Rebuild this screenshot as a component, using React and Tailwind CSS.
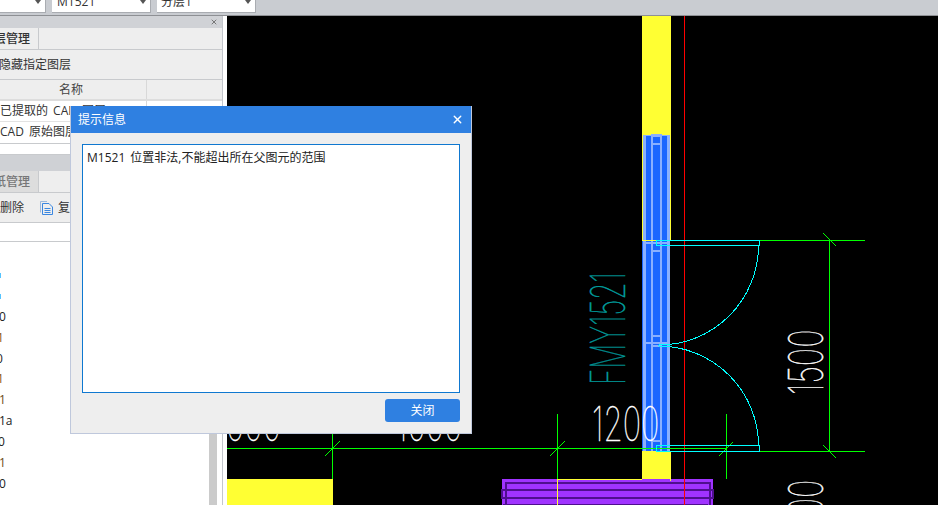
import { X } from "lucide-react";

const font = { fontFamily: '"Open Sans", "Noto Sans CJK SC", sans-serif' };

const listRows = [
  { type: "tick" },
  { type: "tick" },
  { text: "0", cls: "-ml-px text-[#222]" },
  { text: "1", cls: "-ml-[3px] text-[#8a5510]" },
  { text: "0", cls: "-ml-[4px] text-[#222]" },
  { text: "1", cls: "-ml-[3px] text-[#8a5510]" },
  { text: "1", cls: "-ml-px text-[#6b4a18]" },
  { text: "1a", cls: "-ml-px text-[#222]" },
  { text: "0", cls: "-ml-[2px] text-[#222]" },
  { text: "1", cls: "-ml-px text-[#6b4a18]" },
  { text: "0", cls: "-ml-px text-[#222]" },
];

function SelectBox({ className, label, labelClass }) {
  return (
    <div className={`relative h-[13px] overflow-hidden border-r border-b border-[#a9acb1] bg-white ${className}`}>
      <span className={`absolute -top-[7px] text-xs leading-[18px] text-[#333] ${labelClass}`}>{label}</span>
      <span className="absolute right-[4px] top-0 h-0 w-0 border-x-[3px] border-t-[4px] border-x-transparent border-t-[#555]" />
    </div>
  );
}

function TopBar() {
  return (
    <div className="flex h-[16px] shrink-0 gap-[6px] overflow-hidden border-b border-[#8e9094] bg-[#c9ccd1]">
      <SelectBox className="w-[46px]" label="" labelClass="" />
      <SelectBox className="w-[99px]" label="M1521" labelClass="left-[5px]" />
      <SelectBox className="w-[99px]" label="分层1" labelClass="left-[4px]" />
    </div>
  );
}

function LeftPanel() {
  return (
    <div className="flex w-[227px] shrink-0 flex-col bg-white text-xs text-[#333]">
      <div className="flex w-[223px] flex-1 flex-col overflow-hidden border-r border-[#c3c6cc]">
        {/* layer panel */}
        <div className="flex h-[12px] shrink-0 items-center justify-end bg-[#d0d2d6] pr-[4px]">
          <X className="h-[8px] w-[8px] text-[#777]" strokeWidth={3} />
        </div>
        <div className="flex h-[22px] shrink-0 border-b border-[#c8cacd] bg-[#eeeeee]">
          <div className="w-[39px] overflow-hidden border-r border-[#c8cacd] bg-[#eeeeee] leading-[21px]">
            <span className="-ml-[6px] block font-medium whitespace-nowrap">层管理</span>
          </div>
        </div>
        <div className="flex h-[30px] shrink-0 items-center border-b border-[#c8cacd] bg-[#eeeeee]">
          <span className="-ml-px whitespace-nowrap">隐藏指定图层</span>
        </div>
        <div className="flex h-[21px] shrink-0 border-b-2 border-[#dddddd] bg-[#eeeeee]">
          <div className="w-[147px] border-r border-[#d8d8d8] pr-[4px] text-center leading-[19px] text-[#444]">名称</div>
        </div>
        <div className="flex h-[21px] shrink-0 border-b border-[#e2e2e2]">
          <div className="w-[147px] border-r border-[#d8d8d8] leading-[20px] whitespace-nowrap [word-spacing:2px]">已提取的 CAD 图层</div>
        </div>
        <div className="flex h-[22px] shrink-0 border-b border-[#c8cacd]">
          <div className="w-[147px] leading-[20px] whitespace-nowrap [word-spacing:2px]">CAD 原始图层</div>
        </div>
        <div className="h-[11px] shrink-0 border-b border-[#c8cacd] bg-white" />
        <div className="h-[16px] shrink-0 bg-[#cfd1d5]" />

        {/* drawing panel */}
        <div className="flex h-[22px] shrink-0 border-b border-[#c8cacd] bg-[#eeeeee]">
          <div className="w-[39px] overflow-hidden border-r border-[#c8cacd] bg-[#dddddd] leading-[21px] text-[#777]">
            <span className="-ml-[6px] block font-medium whitespace-nowrap">纸管理</span>
          </div>
        </div>
        <div className="flex h-[30px] shrink-0 items-center border-b border-[#c8cacd] bg-[#eeeeee]">
          <span className="whitespace-nowrap">删除</span>
          <svg className="ml-[16px] h-[14px] w-[13px]" viewBox="0 0 13 14" fill="none" stroke="#3b87e0" strokeWidth="1">
            <path d="M0.5 11.5V0.5H7" stroke="#9db9dc" />
            <path d="M2.5 13.5V2.5H9L12.5 6V13.5Z" />
            <path d="M4.5 7.5H10.5M4.5 9.5H10.5M4.5 11.5H10.5" />
          </svg>
          <span className="ml-[5px]">复</span>
        </div>
        <div className="h-[19px] shrink-0 border-b border-[#c8cacd]" />
        <div className="relative flex-1 overflow-hidden pt-[23px]">
          {listRows.map((row, i) =>
            row.type === "tick" ? (
              <div key={i} className="flex h-[20.9px] items-center">
                <span className="h-[5px] w-px bg-[#55c4ff]" />
              </div>
            ) : (
              <div key={i} className={`h-[20.9px] leading-[20.9px] ${row.cls}`}>
                {row.text}
              </div>
            ),
          )}
          <div className="absolute top-0 right-[5px] bottom-0 w-[8px] bg-[#cbcbcb]" />
        </div>
      </div>
    </div>
  );
}

function CadCanvas() {
  const thin = { fontFamily: "Inter, sans-serif", fontWeight: 100, fontSize: 47 };
  return (
    <svg className="block h-[489px] min-w-0 flex-1" viewBox="227 16 711 489">
      <rect x="227" y="16" width="711" height="489" fill="#000" />

      <g shapeRendering="crispEdges">
        {/* yellow column and slab */}
        <rect x="642" y="16" width="29" height="120" fill="#ffff33" />
        <rect x="642" y="451" width="29" height="28" fill="#ffff33" />
        <rect x="227" y="479" width="106" height="26" fill="#ffff33" />

        {/* purple beam */}
        <rect x="502" y="479" width="211" height="26" fill="#a033ff" />
        <g fill="#4f0f8f">
          <rect x="505" y="482" width="205" height="2" />
          <rect x="505" y="482" width="2" height="23" />
          <rect x="709" y="482" width="2" height="23" />
          <rect x="503" y="489" width="209" height="2" />
          <rect x="503" y="497" width="209" height="2" />
          <rect x="503" y="504" width="205" height="1" />
          <rect x="501" y="489" width="2" height="10" />
          <rect x="712" y="489" width="2" height="10" />
        </g>
        <rect x="557" y="479" width="85" height="1" fill="#ffff33" />
        <rect x="557" y="479" width="1" height="26" fill="#ffff33" />
        <rect x="670" y="479" width="1" height="2" fill="#ffff33" />

        {/* door leaves, blue */}
        <rect x="643" y="135" width="27" height="316" fill="#1a66ff" />
        <rect x="642" y="241" width="1" height="210" fill="#1a66ff" />
        <g fill="#8ab0ff">
          <rect x="643" y="136" width="3" height="315" />
          <rect x="651" y="136" width="2" height="315" />
          <rect x="660" y="136" width="2" height="315" />
          <rect x="667" y="136" width="3" height="315" />
          <rect x="643" y="135" width="27" height="1" />
          <rect x="651" y="134" width="11" height="3" />
          <rect x="653" y="143" width="7" height="2" />
          <rect x="643" y="242" width="27" height="2" />
          <rect x="653" y="250" width="7" height="2" />
          <rect x="653" y="335" width="8" height="2" />
          <rect x="645" y="342" width="22" height="2" />
          <rect x="651" y="345" width="9" height="2" />
          <rect x="653" y="440" width="7" height="2" />
        </g>
        <rect x="642" y="135" width="1" height="106" fill="#ffff33" />
        <rect x="670" y="135" width="1" height="106" fill="#ffff33" />
        <rect x="642" y="240" width="15" height="1" fill="#ffff33" />

        {/* red axis */}
        <rect x="684" y="16" width="1" height="489" fill="#ff0000" />

        {/* green dimension lines */}
        <g stroke="#00ff00" strokeWidth="1" fill="none">
          <path d="M759 240.5H865" />
          <path d="M759 451.5H865" />
          <path d="M829.5 240V451" />
          <path d="M823 233L836 246" />
          <path d="M823 445L836 458" />
          <path d="M227 448.5H727" />
          <path d="M726.5 414V479" />
          <path d="M557.5 414V479" />
          <path d="M332.5 430V479" />
          <path d="M719 456L733 442" />
          <path d="M550 456L565 441" />
          <path d="M325 456L340 441" />
        </g>

        {/* door swing */}
        <g stroke="#00ffff" strokeWidth="1" fill="none">
          <rect x="656.5" y="240.5" width="103" height="5" />
          <rect x="656.5" y="445.5" width="103" height="6" />
          <path d="M758.5 245.5A100 100 0 0 1 658 345" />
          <path d="M758.5 446A100 100 0 0 0 658 346" />
        </g>
      </g>

      {/* dimension text */}
      <g style={thin} fill="#ffffff" stroke="#ffffff" strokeWidth="0.5">
        <text transform="translate(592 441) scale(0.66 1)">1200</text>
        <text transform="translate(823 395) rotate(-90) scale(0.66 1)">1500</text>
        <text transform="translate(823 546) rotate(-90) scale(0.66 1)">1000</text>
        <text transform="translate(396 441) scale(0.66 1)">1000</text>
        <text transform="translate(226 441) scale(0.66 1)">000</text>
        <text fill="#00a0a0" stroke="#00a0a0" transform="translate(625 385) rotate(-90) scale(0.595 1)">FMY1521</text>
      </g>
    </svg>
  );
}

function MessageDialog() {
  return (
    <div className="absolute top-[106px] left-[70px] flex h-[328px] w-[402px] flex-col border-r border-b border-l border-[#bfc8dc] bg-[#eeeeee]">
      <div className="flex h-[27px] shrink-0 items-center justify-between bg-[#2f80e1] pr-[7px] pl-[7px] text-xs text-white">
        <span>提示信息</span>
        <X className="h-[13px] w-[13px]" strokeWidth={2.5} />
      </div>
      <div className="mx-[11px] mt-[11px] h-[249px] border border-[#0f78d0] bg-white px-[4px] pt-[5px] text-xs leading-[16px] text-[#222] [word-spacing:2px]">
        M1521 位置非法,不能超出所在父图元的范围
      </div>
      <div className="mt-[6px] flex justify-end pr-[11px]">
        <button className="h-[23px] w-[75px] rounded-[3px] bg-[#2f80e1] text-xs text-white">关闭</button>
      </div>
    </div>
  );
}

export default function App() {
  return (
    <div className="relative flex h-[505px] w-[938px] flex-col overflow-hidden bg-white" style={font}>
      <TopBar />
      <div className="flex min-h-0 flex-1">
        <LeftPanel />
        <CadCanvas />
      </div>
      <MessageDialog />
    </div>
  );
}
